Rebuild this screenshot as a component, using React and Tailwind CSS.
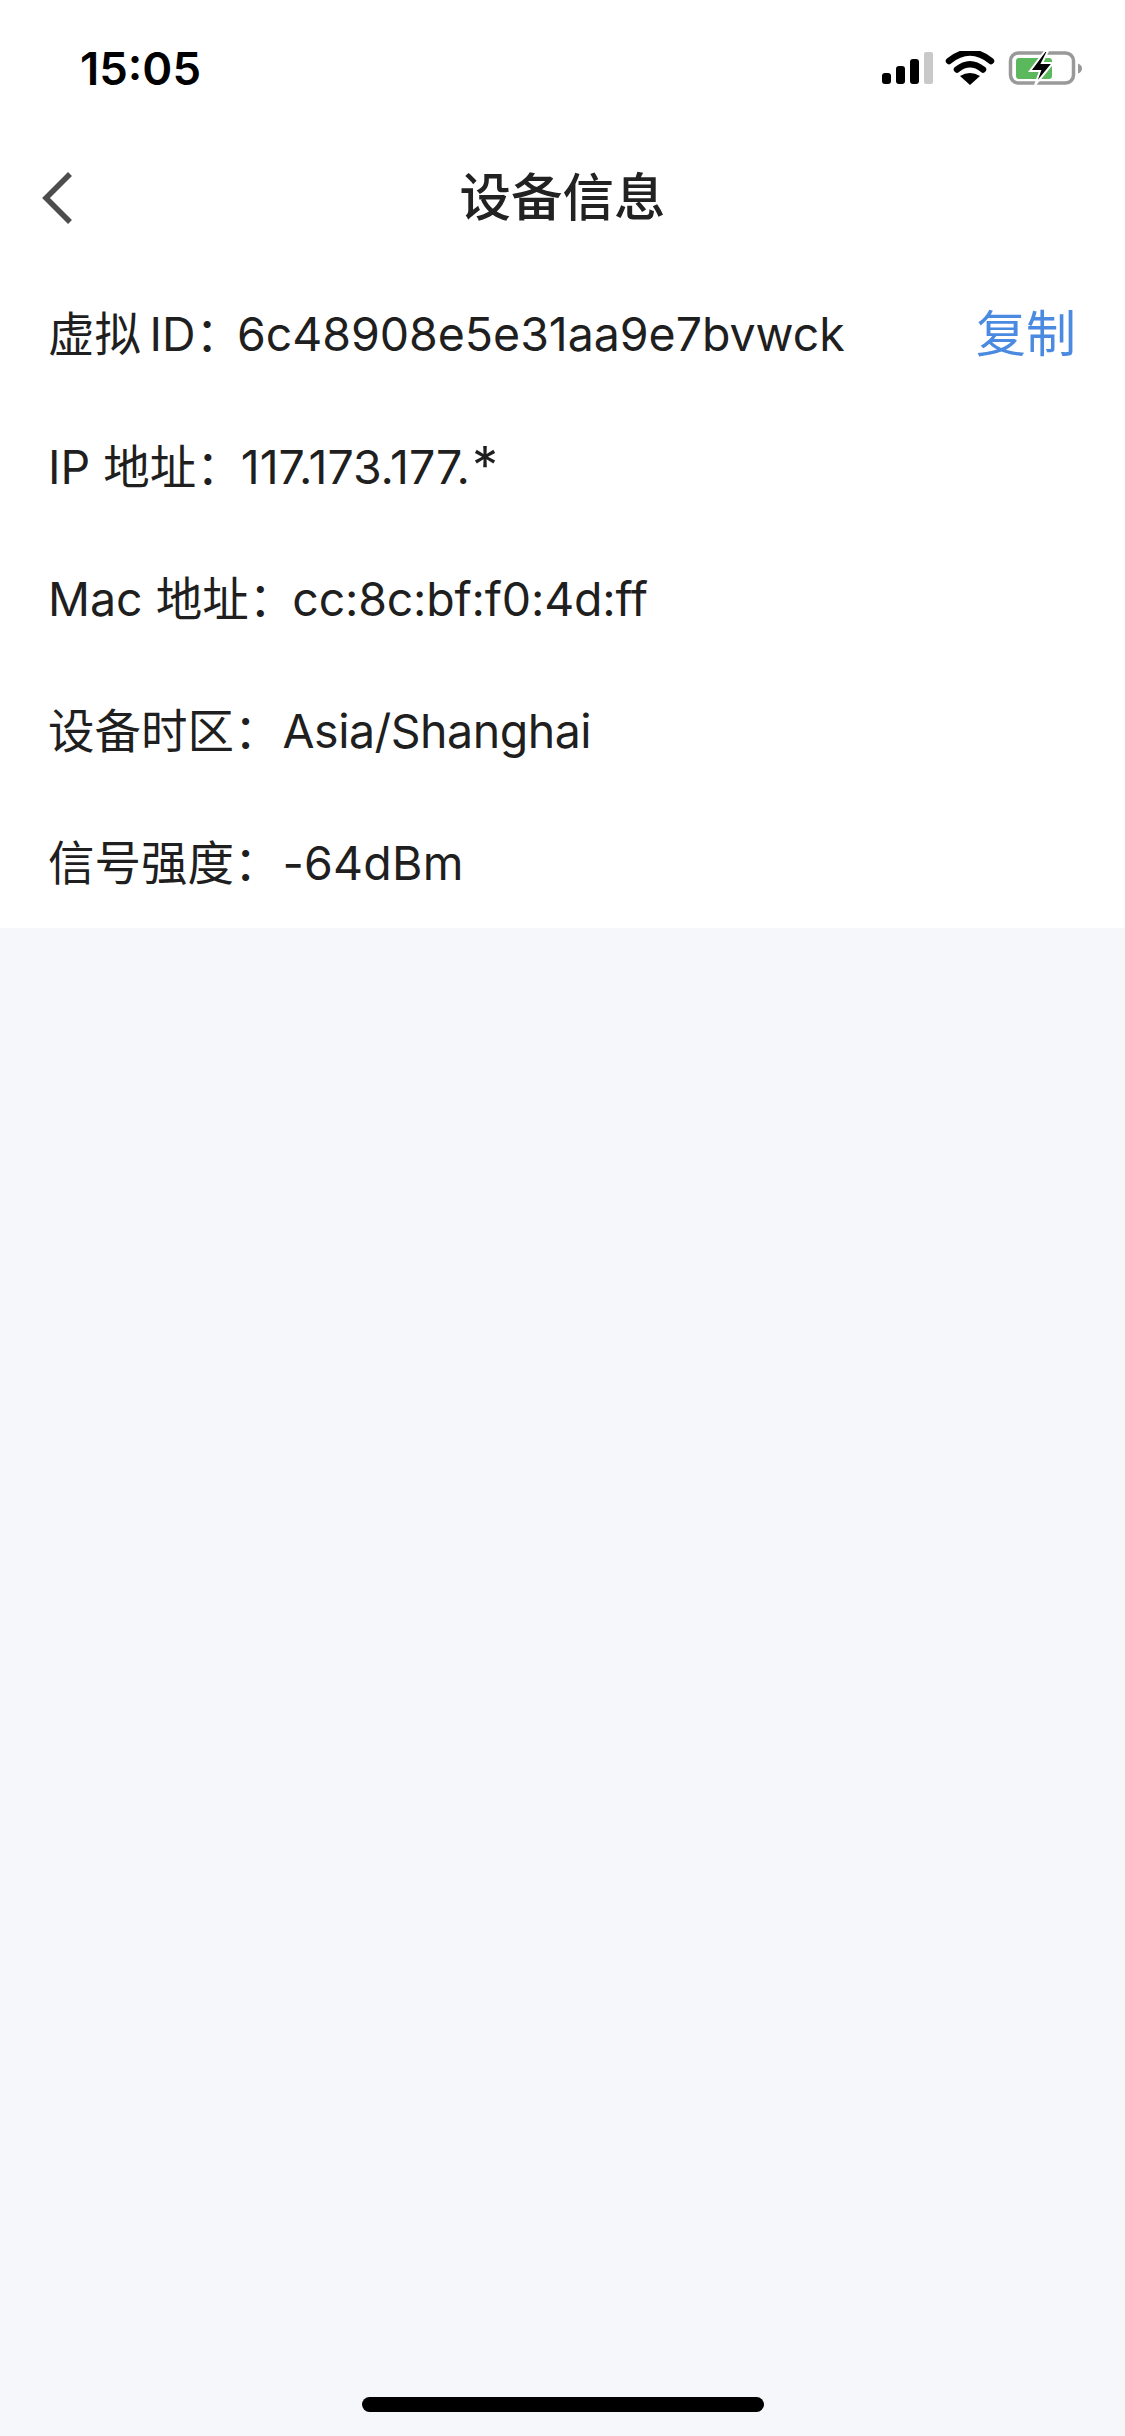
const stack = "font-['Inter','Noto_Sans_CJK_SC',sans-serif]";

function StatusIcons() {
  return (
    <svg width="204" height="36" viewBox="0 0 204 36" fill="none">
      <rect x="2" y="22" width="9" height="11" rx="3" fill="#000" />
      <rect x="16" y="15" width="9" height="18" rx="3" fill="#000" />
      <rect x="30" y="8" width="9" height="25" rx="3" fill="#000" />
      <rect x="44" y="1" width="9" height="32" rx="2" fill="#c9c9c9" />
      <path d="M69 10 Q90 -7 111 10" stroke="#000" strokeWidth="6.5" strokeLinecap="round" fill="none" />
      <path d="M77 18.5 Q90 8 103 18.5" stroke="#000" strokeWidth="6.5" strokeLinecap="round" fill="none" />
      <path d="M80 25 Q90 19 100 25 L90 34 Z" fill="#000" />
      <rect x="130.5" y="2" width="63" height="30" rx="8" stroke="#999" strokeWidth="3.5" fill="none" />
      <rect x="136" y="7" width="36" height="21" rx="3" fill="#5cb85c" />
      <path d="M198 12.5 Q202 14 202 17.5 Q202 21 198 22.5 Z" fill="#999" />
      <path d="M165 0 L150 20 L160 20 L155 34 L173 12 L162 12 L168 0 Z" fill="#000" stroke="#fff" strokeWidth="2" />
    </svg>
  );
}

function Row({ label, children, action, first }) {
  return (
    <div className={`flex h-[132px] items-center justify-between pl-[48px] pr-[49px] text-[46.5px] text-[#1f1f1f] ${first ? "pt-[1px]" : "pt-[3px]"}`}>
      <div className="flex items-center whitespace-nowrap">
        <span>{label}</span>
        {children}
      </div>
      {action && <span className="text-[50px] text-[#4a8ae0]">{action}</span>}
    </div>
  );
}

export default function App() {
  return (
    <div lang="zh-CN" className={`${stack} flex min-h-[2436px] w-[1125px] flex-col bg-[#f5f7fb]`}>
      <div className="bg-white">
        <div className="flex h-[132px] items-center justify-between pl-[80px] pr-[41px] pt-[6px]">
          <span className="text-[45.5px] font-semibold text-black">15:05</span>
          <StatusIcons />
        </div>
        <div className="relative flex h-[132px] items-center justify-center">
          <svg className="absolute left-[40px] top-[38px]" width="36" height="56" viewBox="0 0 36 56" fill="none">
            <path d="M30 4 L6 28 L30 52" stroke="#4d4d4d" strokeWidth="5.5" fill="none" />
          </svg>
          <span className="text-[51.5px] font-medium text-[#222222]">设备信息</span>
        </div>
        <div className="pt-[4px]">
          <Row first label={"虚拟\u2009ID："} action="复制"><span className="ml-[-5px] tracking-[-0.05px]">6c48908e5e31aa9e7bvwck</span></Row>
          <Row label="IP 地址："><span className="ml-[-2px]">117.173.177.<span className="ml-[2px] text-[52px] leading-none">*</span></span></Row>
          <Row label="Mac 地址："><span className="ml-[-3px] tracking-[-0.2px]">cc:8c:bf:f0:4d:ff</span></Row>
          <Row label="设备时区："><span className="ml-[2px] tracking-[-0.5px]">Asia/Shanghai</span></Row>
          <Row label="信号强度："><span className="ml-[2px] tracking-[0.2px]">-64dBm</span></Row>
        </div>
      </div>
      <div className="flex flex-1 items-end justify-center pb-[24px]">
        <div className="h-[15px] w-[402px] rounded-full bg-black" />
      </div>
    </div>
  );
}
